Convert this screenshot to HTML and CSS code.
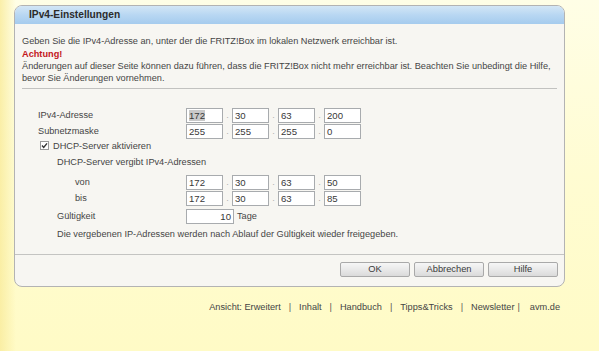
FILE: index.html
```html
<!DOCTYPE html>
<html lang="de">
<head>
<meta charset="utf-8">
<title>IPv4-Einstellungen</title>
<link rel="stylesheet" href="styles.css">
</head>
<body>
<div class="page">
  <div class="panel">
    <div class="panel-head">IPv4-Einstellungen</div>
    <div class="panel-body">
      <p class="intro">Geben Sie die IPv4-Adresse an, unter der die FRITZ!Box im lokalen Netzwerk erreichbar ist.</p>
      <div class="warn">
        <div class="warn-title">Achtung!</div>
        <div>Änderungen auf dieser Seite können dazu führen, dass die FRITZ!Box nicht mehr erreichbar ist. Beachten Sie unbedingt die Hilfe,<br>bevor Sie Änderungen vornehmen.</div>
      </div>
      <div class="rule"></div>
      <div class="form">
        <div class="row">
          <div class="label">IPv4-Adresse</div>
          <div class="ip">
            <div class="field"><span class="sel">172</span></div><span class="dot">.</span>
            <div class="field">30</div><span class="dot">.</span>
            <div class="field">63</div><span class="dot">.</span>
            <div class="field">200</div>
          </div>
        </div>
        <div class="row">
          <div class="label">Subnetzmaske</div>
          <div class="ip">
            <div class="field">255</div><span class="dot">.</span>
            <div class="field">255</div><span class="dot">.</span>
            <div class="field">255</div><span class="dot">.</span>
            <div class="field">0</div>
          </div>
        </div>
        <div class="check-row">
          <svg class="cb" width="9" height="9" viewBox="0 0 9 9"><rect x="0.5" y="0.5" width="8" height="8" fill="#fff" stroke="#9a9a9a"/><path d="M2 4.6 L3.7 6.4 L7 2.4" fill="none" stroke="#333" stroke-width="1.4"/></svg>
          <span>DHCP-Server aktivieren</span>
        </div>
        <div class="sub-title">DHCP-Server vergibt IPv4-Adressen</div>
        <div class="row range-first">
          <div class="label ind2">von</div>
          <div class="ip">
            <div class="field">172</div><span class="dot">.</span>
            <div class="field">30</div><span class="dot">.</span>
            <div class="field">63</div><span class="dot">.</span>
            <div class="field">50</div>
          </div>
        </div>
        <div class="row">
          <div class="label ind2">bis</div>
          <div class="ip">
            <div class="field">172</div><span class="dot">.</span>
            <div class="field">30</div><span class="dot">.</span>
            <div class="field">63</div><span class="dot">.</span>
            <div class="field">85</div>
          </div>
        </div>
        <div class="row valid">
          <div class="label ind1">Gültigkeit</div>
          <div class="field wide">10</div>
          <span class="unit">Tage</span>
        </div>
        <div class="note">Die vergebenen IP-Adressen werden nach Ablauf der Gültigkeit wieder freigegeben.</div>
      </div>
    </div>
    <div class="panel-foot">
      <button class="btn">OK</button>
      <button class="btn">Abbrechen</button>
      <button class="btn">Hilfe</button>
    </div>
  </div>
  <div class="links">
    <span>Ansicht: Erweitert</span><span class="sep">|</span><span>Inhalt</span><span class="sep">|</span><span>Handbuch</span><span class="sep">|</span><span>Tipps&amp;Tricks</span><span class="sep">|</span><span>Newsletter</span><span class="sep narrow">|</span><span>avm.de</span>
  </div>
</div>
</body>
</html>
```

FILE: styles.css
```css
html, body {
  margin: 0;
  padding: 0;
}
body {
  width: 599px;
  height: 351px;
  overflow: hidden;
  font-family: "Liberation Sans", Arial, sans-serif;
  font-size: 9.2px;
  color: #454545;
  background:
    linear-gradient(to right, rgba(249, 236, 158, 0.85) 0, rgba(255, 252, 210, 0) 16px),
    linear-gradient(to bottom, #fffee6 0, #fffcd2 50%, #fffbc6 100%);
}
.page {
  padding: 5px 0 0 14px;
}
.panel {
  box-sizing: border-box;
  width: 551px;
  border: 1px solid #b3b3b3;
  border-radius: 8px;
  background: #f7f6f2;
  overflow: hidden;
}
.panel-head {
  height: 18px;
  line-height: 18px;
  padding-left: 14px;
  font-size: 10.2px;
  font-weight: bold;
  color: #2b2b2b;
  background: linear-gradient(to bottom, #d3e6f6 0, #b8d7f2 50%, #a5cbee 100%);
}
.panel-body {
  padding: 11px 7px 0 7px;
}
.intro {
  margin: 0 0 1px 0;
  line-height: 12px;
}
.warn {
  line-height: 12px;
}
.warn-title {
  color: #c3161c;
  font-weight: bold;
}
.rule {
  margin-top: 4px;
  height: 1px;
  background: #c2c2c0;
}
.form {
  padding: 18px 0 14px 16px;
}
.row {
  display: flex;
  align-items: center;
  height: 16px;
}
.label {
  box-sizing: border-box;
  width: 148px;
  flex: none;
}
.label.ind1 {
  padding-left: 19px;
}
.label.ind2 {
  padding-left: 37px;
}
.ip {
  display: flex;
  align-items: center;
}
.field {
  box-sizing: border-box;
  width: 37px;
  height: 15px;
  line-height: 13px;
  padding-left: 2px;
  border: 1px solid #a8abae;
  background: #fff;
  font-size: 9.6px;
  color: #383838;
}
.field.wide {
  width: 48px;
  text-align: right;
  padding: 0 2px 0 0;
}
.sel {
  background: #c9c9c9;
}
.dot {
  width: 9px;
  text-align: center;
  color: #b0b0b0;
  line-height: 13px;
}
.unit {
  margin-left: 3px;
}
.check-row {
  display: flex;
  align-items: center;
  height: 13px;
  padding-left: 2px;
}
.cb {
  display: block;
  margin-right: 4px;
}
.sub-title {
  margin-top: 4px;
  padding-left: 19px;
  line-height: 13px;
}
.range-first {
  margin-top: 5px;
}
.valid {
  margin-top: 2px;
}
.note {
  margin-top: 4px;
  padding-left: 19px;
  line-height: 12px;
}
.panel-foot {
  height: 32px;
  border-top: 1px solid #c4c4c2;
  display: flex;
  justify-content: flex-end;
  align-items: flex-start;
  gap: 4px;
  padding: 7px 6px 0 0;
  box-sizing: border-box;
}
.btn {
  box-sizing: border-box;
  width: 70px;
  height: 15px;
  padding: 0;
  font-family: "Liberation Sans", Arial, sans-serif;
  font-size: 9.3px;
  line-height: 13px;
  color: #3a3a3a;
  border: 1px solid #a9a9a9;
  border-radius: 2px;
  background: linear-gradient(to bottom, #f6f6f6 0, #e9e9e9 50%, #dadada 100%);
}
.links {
  width: 546px;
  margin-top: 14px;
  text-align: right;
  line-height: 12px;
  color: #444;
  white-space: nowrap;
}
.sep {
  padding: 0 8px;
  color: #555;
}
.sep.narrow {
  padding-left: 3px;
  padding-right: 10px;
}
```
